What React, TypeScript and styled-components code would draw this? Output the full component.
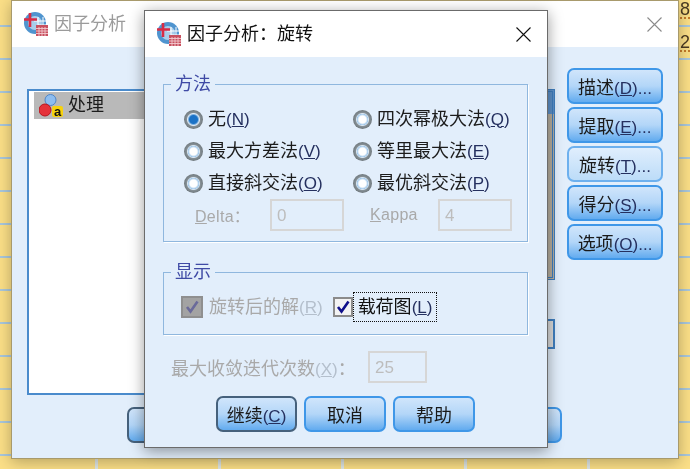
import styled, { createGlobalStyle } from "styled-components";

const GlobalStyle = createGlobalStyle`
    html, body {
        margin: 0;
        padding: 0;
        background: #fbdf87;
    }
    body {
        font-family: "Liberation Sans", "Noto Sans CJK SC", sans-serif;
        font-size: 18px;
        color: #1c1c1c;
    }
`;

const Desktop = styled.div`
    position: relative;
    width: 690px;
    height: 469px;
    overflow: hidden;
    background-color: #fbdf87;
    background-image:
        repeating-linear-gradient(to bottom, transparent 0 25px, #a9c7dc 25px 27px, transparent 27px 33px),
        repeating-linear-gradient(to right, transparent 0 95px, #dfe6e4 95px 98px, transparent 98px 123px);
    filter: blur(0.35px);
`;

const SheetValue = styled.span<{ $top: number }>`
    position: absolute;
    left: 680px;
    top: ${(p) => p.$top}px;
    font-size: 18px;
    line-height: 16px;
    color: #4a3a22;
    border-bottom: 2px dotted #c47a2a;
`;

const Window = styled.div<{ $left: number; $top: number; $width: number; $height: number; $active?: boolean }>`
    position: absolute;
    left: ${(p) => p.$left}px;
    top: ${(p) => p.$top}px;
    width: ${(p) => p.$width}px;
    height: ${(p) => p.$height}px;
    box-sizing: border-box;
    display: flex;
    flex-direction: column;
    background: #e2eefb;
    border: 1px solid ${(p) => (p.$active ? "#6b6b6b" : "#a89a6c")};
    box-shadow: 0 3px 14px rgba(0, 0, 0, ${(p) => (p.$active ? 0.4 : 0.28)});
`;

const TitleBar = styled.div<{ $active?: boolean }>`
    flex: none;
    height: 46px;
    display: flex;
    align-items: center;
    gap: 6px;
    padding: 0 16px 0 12px;
    background: #fff;
    color: ${(p) => (p.$active ? "#111" : "#9b9b9b")};
    line-height: 46px;
`;

const TitleText = styled.span`
    flex: 1;
`;

const BackBody = styled.div`
    flex: 1;
    padding: 21px 0 0 15px;
    display: flex;
    flex-direction: column;
`;

const BackMain = styled.div`
    height: 327px;
    display: flex;
    align-items: flex-start;
`;

const VarList = styled.div`
    width: 210px;
    height: 306px;
    margin-top: 21px;
    box-sizing: border-box;
    border: 2px solid #4a8bcc;
    background: #fff;
    padding: 1px 5px;
`;

const VarRow = styled.div`
    height: 27px;
    display: flex;
    align-items: center;
    gap: 5px;
    padding-left: 5px;
    background: #b9b9b9;
    line-height: 27px;
`;

const MiddleColumn = styled.div`
    width: 255px;
    margin: 21px 0 0 63px;
    display: flex;
    flex-direction: column;
    gap: 39px;
`;

const TargetList = styled.div`
    height: 191px;
    box-sizing: border-box;
    border: 1px solid #3f7fc0;
    outline: 1px solid #3f7fc0;
    outline-offset: -3px;
    background: linear-gradient(to bottom, #5f93cc 0 24px, #b9b0a0 24px);
`;

const GroupingBox = styled.div`
    height: 30px;
    box-sizing: border-box;
    border: 2px solid #3f7fc0;
    background: #dcdcdc;
`;

const SideButtons = styled.div`
    margin-left: 12px;
    display: flex;
    flex-direction: column;
    gap: 3px;
`;

const BackFooter = styled.div`
    margin: 12px 0 0 100px;
    width: 435px;
    display: grid;
    grid-template-columns: repeat(5, 1fr);
    gap: 7px;
`;

const PushButton = styled.button<{ $width?: number; $isDefault?: boolean; $light?: boolean }>`
    width: ${(p) => (p.$width ? `${p.$width}px` : "100%")};
    height: 36px;
    box-sizing: border-box;
    padding: 0;
    font: inherit;
    color: #1a1a1a;
    white-space: nowrap;
    border-radius: 7px;
    border: 2px solid ${(p) => (p.$isDefault ? "#46617c" : p.$light ? "#6db0ee" : "#3f97e8")};
    background: ${(p) =>
        p.$light
            ? "linear-gradient(to bottom, #e0eefd, #bcdcf8)"
            : "linear-gradient(to bottom, #d0e5fb 0%, #b3d6f8 50%, #62abef 100%)"};
`;

const DialogBody = styled.div`
    flex: 1;
    padding: 17px 19px 0 18px;
    display: flex;
    flex-direction: column;
`;

const Group = styled.fieldset<{ $spaced?: boolean }>`
    margin: ${(p) => (p.$spaced ? "20px" : "0")} 0 0;
    padding: 0;
    min-width: 0;
    box-sizing: border-box;
    border: 1px solid #8fb7de;
    box-shadow: 1px 1px 0 #fff;
`;

const GroupTitle = styled.legend`
    margin-left: 7px;
    padding: 0 4px;
    line-height: 20px;
    color: #3f4aa5;
`;

const MethodGrid = styled.div`
    padding: 9px 0 10px 20px;
    display: grid;
    grid-template-columns: 169px 1fr;
    grid-auto-rows: 32px;
    align-items: center;
`;

const DisplayRow = styled.div`
    padding: 10px 0 12px 17px;
    display: flex;
    align-items: center;
    gap: 10px;
`;

const RadioRow = styled.label`
    display: flex;
    align-items: center;
    gap: 5px;
    line-height: 24px;
    white-space: nowrap;
`;

const RadioDot = styled.span<{ $checked?: boolean }>`
    flex: none;
    width: 19px;
    height: 19px;
    border-radius: 50%;
    background: ${(p) =>
        p.$checked
            ? "radial-gradient(circle, #1b72c6 0 4px, #7fb2e0 5px, #dfeaf5 6px, #858f95 7px, #70797e 9.5px)"
            : "radial-gradient(circle, #fff 0 3.5px, #9cc4e8 5.5px, #d6e5f2 6px, #858f95 7px, #70797e 9.5px)"};
`;

const Key = styled.span<{ $disabled?: boolean }>`
    font-size: 17px;
    color: ${(p) => (p.$disabled ? "#b4bfcc" : "#25305f")};
`;

const KeyLetter = styled.u``;

const SpinField = styled.div<{ $indent: number; $labelWidth: number }>`
    display: grid;
    grid-template-columns: ${(p) => p.$labelWidth}px 74px;
    padding-left: ${(p) => p.$indent}px;
    align-items: center;
    font-size: 16px;
    color: #a9a9a9;
`;

const FieldLabel = styled.span`
    letter-spacing: 0.3px;
`;

const FieldInput = styled.div<{ $width?: number }>`
    width: ${(p) => p.$width ?? 74}px;
    height: 32px;
    box-sizing: border-box;
    padding-left: 5px;
    border: 2px solid #d6d6d6;
    font-size: 17px;
    line-height: 30px;
    color: #bdbdbd;
`;

const CheckRow = styled.label<{ $disabled?: boolean }>`
    display: flex;
    align-items: center;
    white-space: nowrap;
    line-height: 24px;
    color: ${(p) => (p.$disabled ? "#a9a9a9" : "#111")};
`;

const FocusBox = styled.span`
    height: 30px;
    box-sizing: border-box;
    display: flex;
    align-items: center;
    padding: 0 0 0 5px;
    width: 84px;
    outline: 1px dotted #111;
    outline-offset: -1px;
`;

const CheckBox = styled.span<{ $disabled?: boolean }>`
    flex: none;
    display: flex;
    align-items: center;
    justify-content: center;
    box-sizing: border-box;
    width: ${(p) => (p.$disabled ? 22 : 20)}px;
    height: ${(p) => (p.$disabled ? 22 : 20)}px;
    margin-right: ${(p) => (p.$disabled ? 6 : 0)}px;
    border: 2px solid ${(p) => (p.$disabled ? "#8f8f8f" : "#8b8b8b")};
    background: ${(p) => (p.$disabled ? "#a3a3a3" : "#f3f3f3")};
`;

const IterationRow = styled.div`
    margin-top: 16px;
    padding-left: 8px;
    display: flex;
    align-items: center;
    color: #a9a9a9;
`;

const IterationLabel = styled.span`
    width: 197px;
    white-space: nowrap;
`;

const DialogFooter = styled.div`
    margin: 13px 0 0 53px;
    display: flex;
    gap: 7px;
`;

const AppIcon = ({ size = 24 }: { size?: number }) => (
    <svg width={size} height={size} viewBox="0 0 24 24">
        <circle cx="11" cy="11" r="11" fill="#4f94cf" />
        <circle cx="11" cy="11" r="7" fill="#a9cdea" />
        <path d="M10 9h12M14 13h8M14 5v8M19 5v8" stroke="#fff" strokeWidth="1" />
        <path d="M6 1v14M0 7.5h13" stroke="#d92b45" strokeWidth="2.6" />
        <rect x="12" y="13" width="12" height="11" fill="#c8505f" />
        <path d="M12 16.5h12M12 19h12M12 21.5h12M15 15v9M18 15v9M21 15v9" stroke="#f2c9cf" strokeWidth="0.9" />
    </svg>
);

const VarIcon = () => (
    <svg width="24" height="23" viewBox="0 0 24 23">
        <circle cx="11.5" cy="6" r="5.5" fill="#8dbdf0" stroke="#4f86c8" />
        <circle cx="6" cy="16" r="6" fill="#e5323a" stroke="#b8141c" />
        <rect x="13" y="12" width="11" height="11" rx="2" fill="#f7d20e" />
        <text x="18.5" y="21.5" fontSize="13" fontWeight="700" textAnchor="middle" fill="#111" fontFamily="Liberation Sans">
            a
        </text>
    </svg>
);

const CloseIcon = ({ color }: { color: string }) => (
    <svg width="15" height="15" viewBox="0 0 15 15">
        <path d="M0.5 0.5l14 14M14.5 0.5l-14 14" stroke={color} strokeWidth="1.1" fill="none" />
    </svg>
);

const Tick = ({ color }: { color: string }) => (
    <svg width="16" height="16" viewBox="0 0 16 16">
        <path d="M3 8l3.5 4.5L13.5 2.5" stroke={color} strokeWidth="2.6" fill="none" />
    </svg>
);

export default function App() {
    const backButtons = [
        { text: "描述", key: "D" },
        { text: "提取", key: "E" },
        { text: "旋转", key: "T", light: true },
        { text: "得分", key: "S" },
        { text: "选项", key: "O" },
    ];
    const leftMethods = [
        { text: "无", key: "N", checked: true },
        { text: "最大方差法", key: "V" },
        { text: "直接斜交法", key: "O" },
    ];
    const rightMethods = [
        { text: "四次幂极大法", key: "Q" },
        { text: "等里最大法", key: "E" },
        { text: "最优斜交法", key: "P" },
    ];
    const methods = leftMethods.flatMap((m, i) => [m, rightMethods[i]]);

    return (
        <Desktop>
            <GlobalStyle />
            <SheetValue $top={1}>8</SheetValue>
            <SheetValue $top={34}>2</SheetValue>

            <Window $left={11} $top={0} $width={668} $height={459}>
                <TitleBar>
                    <AppIcon />
                    <TitleText>因子分析</TitleText>
                    <CloseIcon color="#8a8a8a" />
                </TitleBar>
                <BackBody>
                    <BackMain>
                        <VarList>
                            <VarRow>
                                <VarIcon />
                                处理
                            </VarRow>
                        </VarList>
                        <MiddleColumn>
                            <TargetList />
                            <GroupingBox />
                        </MiddleColumn>
                        <SideButtons>
                            {backButtons.map((b) => (
                                <PushButton key={b.key} $width={96} $light={b.light}>
                                    {b.text}
                                    <Key>
                                        (<KeyLetter>{b.key}</KeyLetter>)...
                                    </Key>
                                </PushButton>
                            ))}
                        </SideButtons>
                    </BackMain>
                    <BackFooter>
                        <PushButton $isDefault />
                        <PushButton />
                        <PushButton />
                        <PushButton />
                        <PushButton />
                    </BackFooter>
                </BackBody>
            </Window>

            <Window $left={144} $top={10} $width={404} $height={438} $active>
                <TitleBar $active>
                    <AppIcon />
                    <TitleText>因子分析：旋转</TitleText>
                    <CloseIcon color="#111" />
                </TitleBar>
                <DialogBody>
                    <Group>
                        <GroupTitle>方法</GroupTitle>
                        <MethodGrid>
                            {methods.map((m) => (
                                <RadioRow key={m.key}>
                                    <RadioDot $checked={"checked" in m} />
                                    <span>
                                        {m.text}
                                        <Key>
                                            (<KeyLetter>{m.key}</KeyLetter>)
                                        </Key>
                                    </span>
                                </RadioRow>
                            ))}
                            <SpinField $indent={11} $labelWidth={75}>
                                <FieldLabel>
                                    <KeyLetter>D</KeyLetter>elta：
                                </FieldLabel>
                                <FieldInput>0</FieldInput>
                            </SpinField>
                            <SpinField $indent={17} $labelWidth={68}>
                                <FieldLabel>
                                    <KeyLetter>K</KeyLetter>appa
                                </FieldLabel>
                                <FieldInput>4</FieldInput>
                            </SpinField>
                        </MethodGrid>
                    </Group>

                    <Group $spaced>
                        <GroupTitle>显示</GroupTitle>
                        <DisplayRow>
                            <CheckRow $disabled>
                                <CheckBox $disabled>
                                    <Tick color="#6a6a9a" />
                                </CheckBox>
                                <span>
                                    旋转后的解
                                    <Key $disabled>
                                        (<KeyLetter>R</KeyLetter>)
                                    </Key>
                                </span>
                            </CheckRow>
                            <CheckRow>
                                <CheckBox>
                                    <Tick color="#10108a" />
                                </CheckBox>
                                <FocusBox>
                                    <span>
                                        载荷图
                                        <Key>
                                            (<KeyLetter>L</KeyLetter>)
                                        </Key>
                                    </span>
                                </FocusBox>
                            </CheckRow>
                        </DisplayRow>
                    </Group>

                    <IterationRow>
                        <IterationLabel>
                            最大收敛迭代次数
                            <Key $disabled>
                                (<KeyLetter>X</KeyLetter>)
                            </Key>
                            ：
                        </IterationLabel>
                        <FieldInput $width={59}>25</FieldInput>
                    </IterationRow>

                    <DialogFooter>
                        <PushButton $width={81} $isDefault>
                            继续
                            <Key>
                                (<KeyLetter>C</KeyLetter>)
                            </Key>
                        </PushButton>
                        <PushButton $width={82}>取消</PushButton>
                        <PushButton $width={82}>帮助</PushButton>
                    </DialogFooter>
                </DialogBody>
            </Window>
        </Desktop>
    );
}
